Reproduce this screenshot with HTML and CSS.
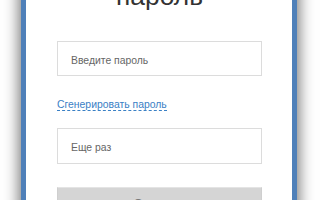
FILE: index.html
```html
<!DOCTYPE html>
<html lang="ru">
<head>
<meta charset="utf-8">
<link rel="stylesheet" href="styles.css">
</head>
<body>
<div class="page">
  <div class="modal">
    <h1 class="title">Придумайте<br>пароль</h1>
    <form class="form">
      <div class="field">Введите пароль</div>
      <div class="link-row"><a class="gen" href="#">Сгенерировать пароль</a></div>
      <div class="field field-2">Еще раз</div>
      <div class="btn">Создать</div>
    </form>
  </div>
</div>
</body>
</html>
```

FILE: styles.css
```css
html, body {
  margin: 0;
  padding: 0;
  background: #ffffff;
  overflow: hidden;
}
.page {
  width: 320px;
  height: 200px;
  overflow: hidden;
  font-family: "Liberation Sans", Arial, sans-serif;
}
.modal {
  box-sizing: border-box;
  width: 276px;
  margin-left: 21px;
  margin-top: -49px;
  background: #ffffff;
  border: 5px solid #4f80b9;
  border-top: 0;
  box-shadow: 0 0 14px 2px rgba(0, 0, 0, 0.55);
  padding: 0 30px 0 31px;
}
.title {
  margin: 0;
  font-size: 26.4px;
  line-height: 30px;
  font-weight: normal;
  color: #333333;
  text-align: center;
}
.form {
  display: flex;
  flex-direction: column;
  padding-top: 30px;
}
.field {
  box-sizing: border-box;
  height: 35px;
  border: 1px solid #dcdcdc;
  padding-left: 13px;
  display: flex;
  align-items: center;
  font-size: 10.4px;
  color: #666666;
  padding-top: 3px;
}
.link-row {
  margin-top: 23px;
  line-height: 12px;
  font-size: 10.4px;
}
.gen {
  color: #3a80c5;
  text-decoration: none;
  border-bottom: 1px dashed #3a80c5;
}
.field-2 {
  margin-top: 17px;
  height: 36px;
}
.btn {
  box-sizing: border-box;
  margin-top: 23px;
  height: 36px;
  background: #d5d5d5;
  border: 1px solid #cfcfcf;
  border-top-color: #e4e4e4;
  text-align: center;
  font-size: 14px;
  line-height: 16px;
  padding-top: 8px;
  color: #7a7a7a;
}
```
